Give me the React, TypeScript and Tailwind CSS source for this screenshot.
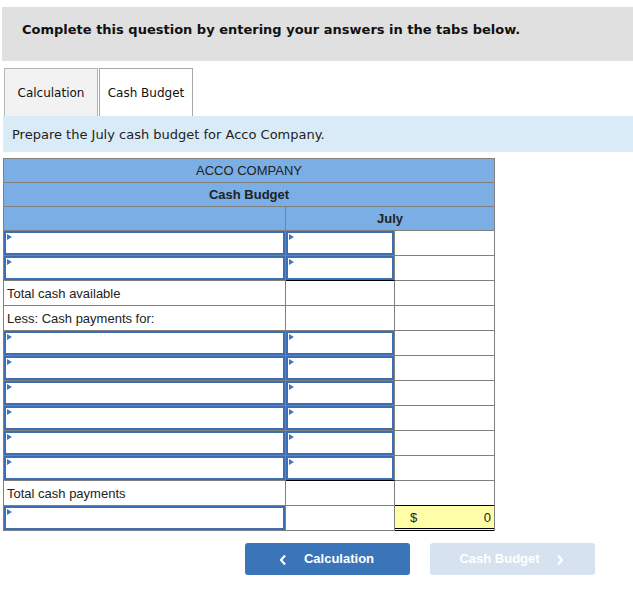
import React from "react";

const Tri = () => (
  <span className="absolute left-[1px] top-[1px] w-0 h-0 border-t-[3px] border-b-[3px] border-l-[5px] border-t-transparent border-b-transparent border-l-[#3a78cc]" />
);

const Input = () => (
  <div className="relative w-full h-full border-2 border-[#3d6db3] bg-white">
    <Tri />
  </div>
);

type Row = {
  label?: string;
  c1Input?: boolean;
  c2Input?: boolean;
  c2BlackBottom?: boolean;
  c3BlackBottom?: boolean;
  yellow?: boolean;
};

const rows: Row[] = [
  { c1Input: true, c2Input: true },
  { c1Input: true, c2Input: true, c2BlackBottom: true },
  { label: "Total cash available" },
  { label: "Less: Cash payments for:" },
  { c1Input: true, c2Input: true },
  { c1Input: true, c2Input: true },
  { c1Input: true, c2Input: true },
  { c1Input: true, c2Input: true },
  { c1Input: true, c2Input: true },
  { c1Input: true, c2Input: true, c2BlackBottom: true },
  { label: "Total cash payments", c3BlackBottom: true },
  { c1Input: true, yellow: true },
];

const verdana = { fontFamily: '"DejaVu Sans", Verdana, sans-serif' };

export default function App() {
  return (
    <div className="w-[633px] h-[595px] bg-white text-[#222] overflow-hidden" style={{ fontFamily: '"Liberation Sans", Arial, sans-serif' }}>
      <div className="pt-[7px]">
        <div className="ml-[2px] h-[54px] bg-[#e0e0e0] pl-[20px] pt-[13px] text-[13px] font-bold text-[#111]" style={verdana}>
          Complete this question by entering your answers in the tabs below.
        </div>
      </div>
      <div className="mt-[7px] flex items-end pl-[4px] gap-[1px] text-[12px] text-[#111]" style={verdana}>
        <div className="w-[94px] h-[48px] border border-b-0 border-[#b5b5b5] bg-[#f2f2f2] flex items-center justify-center">
          Calculation
        </div>
        <div className="w-[94px] h-[48px] border border-b-0 border-[#a8a8a8] bg-white flex items-center justify-center">
          Cash Budget
        </div>
      </div>
      <div className="ml-[3px] h-[36px] bg-[#daebf8] pl-[9px] pt-[1px] flex items-center text-[13px] text-[#222]" style={verdana}>
        Prepare the July cash budget for Acco Company.
      </div>
      <div className="mt-[6px] ml-[3px] w-[492px] border border-b-0 border-[#808080] text-[13px]">
        <div className="h-[24px] bg-[#7aaee5] border-b border-[#808080] flex items-center justify-center">ACCO COMPANY</div>
        <div className="h-[24px] bg-[#7aaee5] border-b border-[#808080] flex items-center justify-center font-bold">Cash Budget</div>
        <div className="h-[24px] bg-[#7aaee5] flex">
          <div className="w-[282px] border-r border-b border-[#808080]" />
          <div className="flex-1 border-b border-[#808080] flex items-center justify-center pt-[1px] font-bold">July</div>
        </div>
        {rows.map((r, i) => (
          <div key={i} className="h-[25px] flex bg-white">
            <div className="w-[282px] border-r border-b border-[#808080] flex items-center">
              {r.c1Input ? <Input /> : r.label ? <span className="pl-[3px] pt-[2px] text-[#222]">{r.label}</span> : null}
            </div>
            <div
              className={
                r.c2BlackBottom
                  ? "w-[109px] border-r border-b border-r-[#808080] border-b-black"
                  : "w-[109px] border-r border-b border-[#808080]"
              }
            >
              {r.c2Input ? <Input /> : null}
            </div>
            {r.yellow ? (
              <div className="w-[99px] bg-[#ffffa8] border-b-[3px] border-double border-black flex items-center justify-between pl-[15px] pr-[3px] pt-[1px] text-[#222]">
                <span>$</span>
                <span>0</span>
              </div>
            ) : (
              <div className={r.c3BlackBottom ? "w-[99px] border-b border-black" : "w-[99px] border-b border-[#808080]"} />
            )}
          </div>
        ))}
      </div>
      <div className="mt-[12px] pl-[245px] flex gap-[20px] text-[13px] font-bold">
        <div className="w-[165px] h-[32px] rounded-[3px] bg-[#3a74b9] text-white flex items-center justify-center gap-[17px] pr-[2px]">
          <svg width="8" height="12" viewBox="0 0 8 12" className="mt-[1px]">
            <path d="M6 1.5 L2 6 L6 10.5" fill="none" stroke="white" strokeWidth="2.2" />
          </svg>
          <span>Calculation</span>
        </div>
        <div className="w-[165px] h-[32px] rounded-[3px] bg-[#d6e2f0] text-white flex items-center justify-center gap-[16px] pr-[2px]">
          <span>Cash Budget</span>
          <svg width="8" height="12" viewBox="0 0 8 12" className="mt-[1px]">
            <path d="M2 1.5 L6 6 L2 10.5" fill="none" stroke="white" strokeWidth="2.2" />
          </svg>
        </div>
      </div>
    </div>
  );
}
